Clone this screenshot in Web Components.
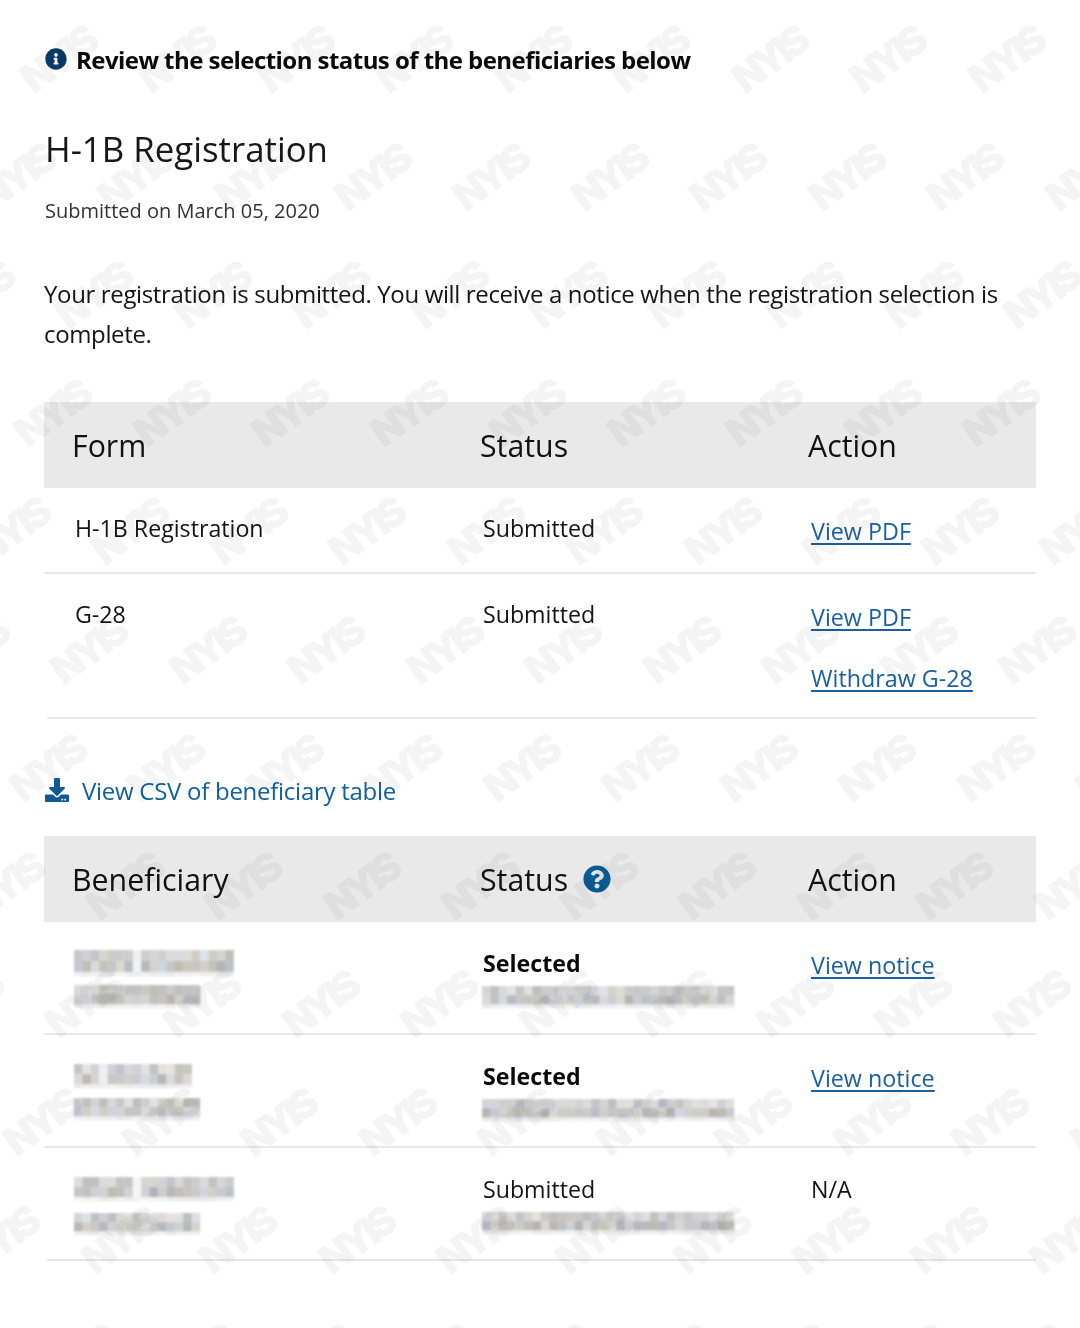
<!DOCTYPE html>
<html lang="en"><head><meta charset="utf-8"><title>H-1B Registration</title>
<style>
html,body{margin:0;padding:0;background:#fff}
body{font-family:"Open Sans","Noto Sans",sans-serif;color:#1b1b1b}
</style></head>
<body>
<status-page>
  <info-banner>Review the selection status of the beneficiaries below</info-banner>
  <page-heading sub="Submitted on March 05, 2020">H-1B Registration</page-heading>
  <lead-text>Your registration is submitted. You will receive a notice when the registration selection is complete.</lead-text>
  <data-table>
    <table-head><span>Form</span><span>Status</span><span>Action</span></table-head>
    <table-row>
      <table-cell>H-1B Registration</table-cell><table-cell>Submitted</table-cell>
      <table-cell link><ui-link>View PDF</ui-link></table-cell>
    </table-row>
    <table-row last>
      <table-cell>G-28</table-cell><table-cell>Submitted</table-cell>
      <table-cell link><ui-link>View PDF</ui-link><ui-link>Withdraw G-28</ui-link></table-cell>
    </table-row>
  </data-table>
  <csv-link>View CSV of beneficiary table</csv-link>
  <data-table tight>
    <table-head><span>Beneficiary</span><span>Status <help-icon></help-icon></span><span>Action</span></table-head>
    <table-row tall>
      <table-cell tall><blur-bar w="158" h="26" seed="3" gap="7" style="margin-top:2px"></blur-bar><blur-bar w="126" h="23" seed="8" style="margin-top:9px"></blur-bar></table-cell>
      <table-cell tall><b>Selected</b><blur-bar w="247" h="22" seed="13" style="margin-top:8px"></blur-bar></table-cell>
      <table-cell link><ui-link>View notice</ui-link></table-cell>
    </table-row>
    <table-row tall>
      <table-cell tall><blur-bar w="112" h="24" seed="21" gap="3" style="margin-top:3px"></blur-bar><blur-bar w="124" h="22" seed="34" style="margin-top:10px"></blur-bar></table-cell>
      <table-cell tall><b>Selected</b><blur-bar w="247" h="22" seed="55" style="margin-top:8px"></blur-bar></table-cell>
      <table-cell link><ui-link>View notice</ui-link></table-cell>
    </table-row>
    <table-row tall last>
      <table-cell tall><blur-bar w="152" h="24" seed="89" gap="7" style="margin-top:3px"></blur-bar><blur-bar w="122" h="22" seed="144" style="margin-top:12px"></blur-bar></table-cell>
      <table-cell tall>Submitted<blur-bar w="252" h="22" seed="233" style="margin-top:8px"></blur-bar></table-cell>
      <table-cell tall>N/A</table-cell>
    </table-row>
  </data-table>
  <water-mark></water-mark>
</status-page>
<script>
function def(name, html, setup){
  customElements.define(name, class extends HTMLElement{
    connectedCallback(){
      if(this.shadowRoot) return;
      const r=this.attachShadow({mode:'open'});
      r.innerHTML=typeof html==='function'?html(this):html;
      if(setup) setup(r,this);
    }
  });
}
const INFO='M256 8C119.043 8 8 119.083 8 256c0 136.997 111.043 248 248 248s248-111.003 248-248C504 119.083 392.957 8 256 8zm0 110c23.196 0 42 18.804 42 42s-18.804 42-42 42-42-18.804-42-42 18.804-42 42-42zm56 254c0 6.627-5.373 12-12 12h-88c-6.627 0-12-5.373-12-12v-24c0-6.627 5.373-12 12-12h12v-64h-12c-6.627 0-12-5.373-12-12v-24c0-6.627 5.373-12 12-12h64c6.627 0 12 5.373 12 12v100h12c6.627 0 12 5.373 12 12v24z';
const HELP='M504 256c0 136.997-111.043 248-248 248S8 392.997 8 256C8 119.083 119.043 8 256 8s248 111.083 248 248zM262.655 90c-54.497 0-89.255 22.957-116.549 63.758-3.536 5.286-2.353 12.415 2.715 16.258l34.699 26.31c5.205 3.947 12.621 3.008 16.665-2.122 17.864-22.658 30.113-35.797 57.303-35.797 20.429 0 45.698 13.148 45.698 32.958 0 14.976-12.363 22.667-32.534 33.976C247.128 238.528 216 254.941 216 296v4c0 6.627 5.373 12 12 12h56c6.627 0 12-5.373 12-12v-1.333c0-28.462 83.186-29.647 83.186-106.667 0-58.002-60.165-102-116.531-102zM256 338c-25.365 0-46 20.635-46 46 0 25.364 20.635 46 46 46s46-20.636 46-46c0-25.365-20.635-46-46-46z';
const DOWN='M216 0h80c13.3 0 24 10.7 24 24v168h87.7c17.8 0 26.7 21.5 14.1 34.1L269.7 378.3c-7.5 7.5-19.8 7.5-27.3 0L90.1 226.1c-12.6-12.6-3.7-34.1 14.1-34.1H192V24c0-13.3 10.7-24 24-24zm296 376v112c0 13.3-10.7 24-24 24H24c-13.3 0-24-10.7-24-24V376c0-13.3 10.7-24 24-24h146.7l49 49c20.1 20.1 52.5 20.1 72.6 0l49-49H488c13.3 0 24 10.7 24 24zm-124 88c0-11-9-20-20-20s-20 9-20 20 9 20 20 20 20-9 20-20zm64 0c0-11-9-20-20-20s-20 9-20 20 9 20 20 20 20-9 20-20z';

def('status-page',`<style>:host{display:block;position:relative;box-sizing:border-box;width:1080px;height:1328px;overflow:hidden;padding:43px 44px 0 44px}</style><slot></slot>`);

def('info-banner',`<style>:host{display:flex;align-items:center;gap:9px;height:32px;padding-left:1px;font-weight:700;font-size:24px;letter-spacing:-.55px;color:#0a0a0a}
svg{width:22px;height:22px;flex:none;fill:#0b3a67}</style><svg viewBox="0 0 512 512"><path d="${INFO}"/></svg><span><slot></slot></span>`);

def('page-heading',e=>`<style>:host{display:block;margin-top:51px}
h1{margin:0;font-weight:400;font-size:34.8px;line-height:46px;padding-left:1px;color:#171717}
p{margin:24px 0 0;padding-left:1px;font-size:20px;line-height:30px;color:#2f3338}</style><h1><slot></slot></h1><p>${e.getAttribute('sub')}</p>`);

def('lead-text',`<style>:host{display:block;margin-top:48px;font-size:24px;letter-spacing:-.36px;line-height:39.5px;color:#141414;width:980px}</style><slot></slot>`);

def('data-table',`<style>:host{display:block;margin-top:49px;width:992px}:host([tight]){margin-top:30px}</style><slot></slot>`);

def('table-head',`<style>:host{display:grid;grid-template-columns:408px 328px 256px;align-items:center;height:86px;background:#e9e9e9;font-size:30.3px;color:#111}
::slotted(span){padding-left:28px;display:flex;align-items:center;gap:15px}</style><slot></slot>`);

def('table-row',`<style>:host{display:grid;grid-template-columns:408px 328px 256px;box-sizing:border-box;min-height:86px;background:linear-gradient(#e8e8e8,#e8e8e8) 0 100%/992px 2px no-repeat}
:host([tall]){height:113px}
:host([last]){background:linear-gradient(#e8e8e8,#e8e8e8) 3px 100%/989px 2px no-repeat}</style><slot></slot>`);

def('table-cell',`<style>:host{display:block;padding:25px 0 26px 31px;font-size:23.2px;line-height:30px;color:#141414}
:host([tall]){padding-top:26px}
:host([link]){padding-top:28px}
::slotted(b){font-weight:700;color:#0a0a0a;display:block}</style><slot></slot>`);

def('ui-link',`<style>:host{display:block;width:max-content;color:#1a5fa0;text-decoration:underline;text-underline-offset:3px;text-decoration-thickness:1.5px;font-size:23.3px;line-height:30px;cursor:pointer}
:host(:not(:first-child)){margin-top:31px}</style><slot></slot>`);

def('csv-link',`<style>:host{display:flex;align-items:center;gap:13px;margin-top:55px;padding-left:1px;height:32px;color:#11609c;font-size:24px;letter-spacing:-.27px}
svg{width:24px;height:24px;fill:#0f5a95;flex:none}</style><svg viewBox="0 0 512 512"><path d="${DOWN}"/></svg><span><slot></slot></span>`);

def('help-icon',`<style>:host{display:inline-flex}svg{width:28px;height:28px;fill:#0b5c96}</style><svg viewBox="0 0 512 512"><path d="${HELP}"/></svg>`);

def('blur-bar',e=>{
  const w=+e.getAttribute('w'),h=+e.getAttribute('h');let s=(+e.getAttribute('seed')*2654435761)>>>0;
  const gap=e.hasAttribute('gap')?+e.getAttribute('gap'):-1;
  const rnd=()=>{s=(s+0x6D2B79F5)>>>0;let t=s;t=Math.imul(t^(t>>>15),t|1);t^=t+Math.imul(t^(t>>>7),t|61);return ((t^(t>>>14))>>>0)/4294967296;};
  const cw=8.4,heights=[h*.42,h*.42,h*.16];let out='',yy=0;
  for(let y=0;y<3;y++){for(let x=0;x*cw<w;x++){
    let g=y==2?230+rnd()*14:(y==0?190:180)+rnd()*38;
    if(x==gap) g=236+rnd()*10;
    const t=(rnd()-.5)*16;
    out+=`<rect x="${(x*cw).toFixed(1)}" y="${yy.toFixed(1)}" width="${cw+.3}" height="${(heights[y]+.3).toFixed(1)}" fill="rgb(${Math.round(g+t*.4)},${Math.round(g)},${Math.round(g-t)})"/>`;
  } yy+=heights[y];}
  const id='b'+e.getAttribute('seed');
  return `<style>:host{display:block;width:${w}px;height:${h}px;margin-left:-1px}svg{display:block;overflow:visible}</style>
  <svg width="${w}" height="${h}" aria-hidden="true"><defs><filter id="${id}" x="-5%" y="-20%" width="110%" height="140%"><feGaussianBlur stdDeviation="0.8"/></filter></defs><g filter="url(#${id})">${out}</g></svg>`;
});

def('water-mark',`<style>:host{position:absolute;inset:0;overflow:hidden;pointer-events:none;display:block;mix-blend-mode:multiply}
span{position:absolute;transform:translate(-50%,-50%) rotate(-36deg);font-family:Inter,"Liberation Sans",sans-serif;font-weight:900;font-size:40px;letter-spacing:-5px;line-height:1;color:#f4f4f4;white-space:nowrap}</style>`,
(r)=>{
  let h='';
  for(let i=0;i<12;i++){
    const y=60+118.1*i, off=57.5-41.3*i;
    for(let k=-10;k<14;k++){
      const x=off+k*118.5;
      if(x<-60||x>1140) continue;
      h+=`<span style="left:${x.toFixed(1)}px;top:${y.toFixed(1)}px">NYIS</span>`;
    }
  }
  r.innerHTML+=h;
});
</script>
</body></html>
